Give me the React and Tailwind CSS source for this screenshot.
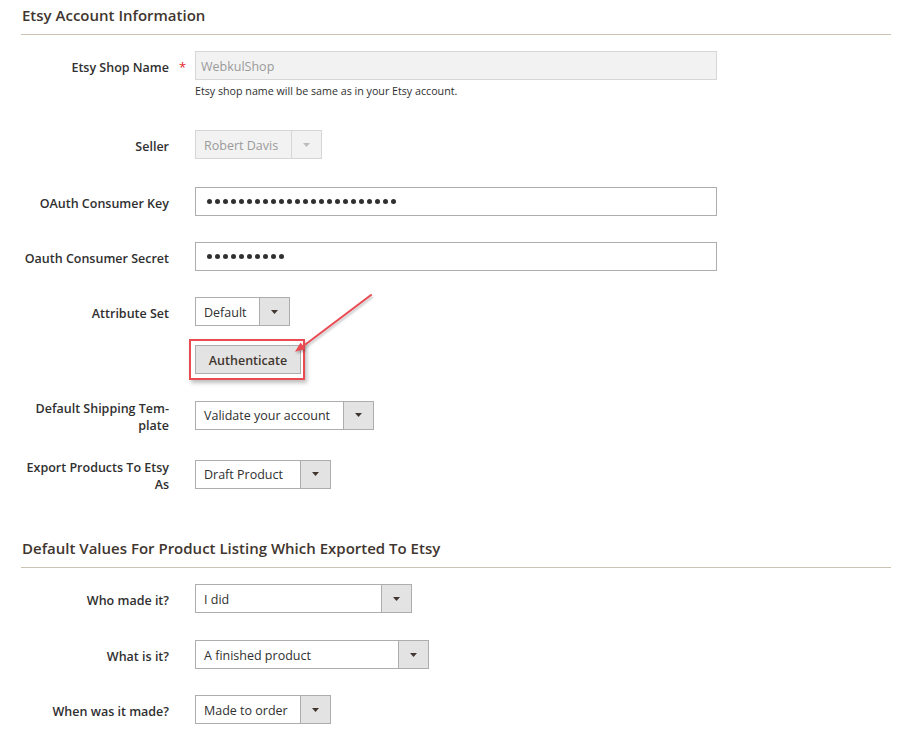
import React from 'react'

const FONT = "font-['Open_Sans',sans-serif]"

function Caret({ muted }) {
  return (
    <svg width="7" height="4" viewBox="0 0 7 4" className="block">
      <path d="M0 0h7L3.5 4z" fill={muted ? '#bdbdbd' : '#41362f'} />
    </svg>
  )
}

function Select({ value, width, disabled }) {
  return (
    <div
      className={`flex h-[29px] border ${
        disabled ? 'border-[#d6d6d6] bg-[#f2f2f2] text-[#9a9a9a]' : 'border-[#adadad] bg-white text-[#303030]'
      }`}
      style={{ width }}
    >
      <div className="flex flex-1 items-center pt-[3px] pl-[8px] text-[12.5px] whitespace-nowrap">{value}</div>
      <div
        className={`flex w-[30px] items-center justify-center border-l ${
          disabled ? 'border-[#d6d6d6] bg-[#f2f2f2]' : 'border-[#adadad] bg-[#e3e3e3]'
        }`}
      >
        <Caret muted={disabled} />
      </div>
    </div>
  )
}

function Dots({ count }) {
  return (
    <div className="flex gap-[3px] pl-[11px]">
      {Array.from({ length: count }).map((_, i) => (
        <span key={i} className="h-[5px] w-[5px] rounded-full bg-[#303030]" />
      ))}
    </div>
  )
}

function Row({ label, required, className = '', children }) {
  return (
    <div className={`flex items-center ${className}`}>
      <div className="w-[148px] pt-[5px] text-right text-[12.5px] font-semibold leading-[16.5px] text-[#303030]">
        {label}
      </div>
      <div className="flex w-[26px] justify-center pl-[1px] pt-[3px] text-[13px] leading-none text-[#e22626]">
        {required ? '*' : ''}
      </div>
      {children}
    </div>
  )
}

function SectionTitle({ children, className = '' }) {
  return (
    <div className={`border-b border-[#ccc3b4] pt-[5px] pb-[9px] ${className}`}>
      <h2 className="pl-[1px] text-[15px] font-semibold leading-[20px] text-[#41362f]">{children}</h2>
    </div>
  )
}

export default function App() {
  return (
    <div className={`relative min-h-[738px] w-[921px] bg-white pr-[30px] pl-[21px] ${FONT}`}>
      <SectionTitle>Etsy Account Information</SectionTitle>

      <Row label="Etsy Shop Name" required className="mt-[16px]">
        <div className="flex h-[29px] w-[522px] items-center border border-[#d6d6d6] bg-[#f2f2f2] pt-[3px] pl-[5px] text-[12.5px] text-[#9a9a9a]">
          WebkulShop
        </div>
      </Row>
      <p className="mt-[4px] pl-[174px] text-[10.7px] leading-[14px] text-[#303030]">
        Etsy shop name will be same as in your Etsy account.
      </p>

      <Row label="Seller" className="mt-[32px]">
        <Select value="Robert Davis" width={127} disabled />
      </Row>

      <Row label="OAuth Consumer Key" className="mt-[28px]">
        <div className="flex h-[29px] w-[522px] items-center border border-[#adadad] bg-white">
          <Dots count={24} />
        </div>
      </Row>

      <Row label="Oauth Consumer Secret" className="mt-[26px]">
        <div className="flex h-[29px] w-[522px] items-center border border-[#adadad] bg-white">
          <Dots count={10} />
        </div>
      </Row>

      <Row label="Attribute Set" className="mt-[26px]">
        <Select value="Default" width={95} />
      </Row>

      <div className="mt-[19px] flex pl-[174px]">
        <div className="relative">
          <button className="h-[29px] w-[106px] border border-[#adadad] bg-[#e3e3e3] pt-[3px] text-[12.5px] font-semibold text-[#41362f]">
            Authenticate
          </button>
          <div className="pointer-events-none absolute -top-[6px] -right-[4px] -bottom-[6px] -left-[6px] border-2 border-[#ea4a52] shadow-[2px_3px_4px_rgba(0,0,0,0.25)]" />
        </div>
      </div>

      <Row
        label={
          <>
            Default Shipping Tem-
            <br />
            plate
          </>
        }
        className="mt-[22px]"
      >
        <Select value="Validate your account" width={179} />
      </Row>

      <Row
        label={
          <>
            Export Products To Etsy
            <br />
            As
          </>
        }
        className="mt-[21px]"
      >
        <Select value="Draft Product" width={136} />
      </Row>

      <SectionTitle className="mt-[40px]">Default Values For Product Listing Which Exported To Etsy</SectionTitle>

      <Row label="Who made it?" className="mt-[16px]">
        <Select value="I did" width={217} />
      </Row>

      <Row label="What is it?" className="mt-[27px]">
        <Select value="A finished product" width={234} />
      </Row>

      <Row label="When was it made?" className="mt-[26px]">
        <Select value="Made to order" width={136} />
      </Row>

      {/* annotation arrow pointing at the Authenticate button */}
      <svg
        className="pointer-events-none absolute top-[288px] left-[288px] drop-shadow-[1px_2px_1px_rgba(0,0,0,0.25)]"
        width="90"
        height="70"
        viewBox="288 288 90 70"
      >
        <line x1="371" y1="295" x2="302" y2="347" stroke="#ea4a52" strokeWidth="2" strokeLinecap="round" />
        <path d="M295 351.7 L305.4 348.9 L300.6 342.5 Z" fill="#ea4a52" />
      </svg>
    </div>
  )
}
